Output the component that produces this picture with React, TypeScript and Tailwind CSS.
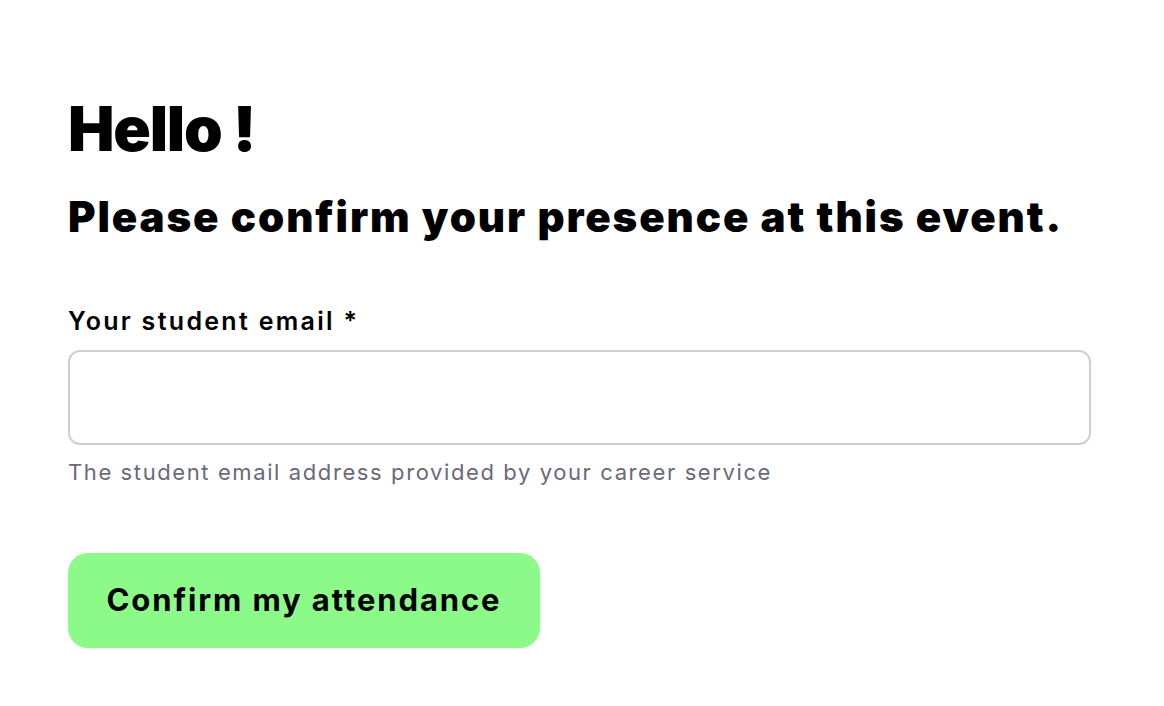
import React from "react";

export default function App() {
  return (
    <div className="min-h-[706px] w-full bg-white px-[68px] pt-[98px] font-['Inter',sans-serif] text-black">
      <h1 className="text-[62px] font-black leading-[62px] tracking-[-1.2px]">Hello !</h1>
      <h2 className="mt-[32px] text-[42px] font-black leading-[50px] tracking-[1.9px]">
        Please confirm your presence at this event.
      </h2>
      <div className="mt-[63px] w-[1023px]">
        <label className="block text-[25px] font-semibold leading-[32px] tracking-[2.3px]">
          Your student email *
        </label>
        <input
          type="email"
          className="mt-[13px] block h-[95px] w-full rounded-[12px] border-2 border-[#cfcfd3] bg-white px-4 outline-none"
        />
        <p className="mt-[12px] text-[22px] leading-[30px] tracking-[1.6px] text-[#6a6a78]">
          The student email address provided by your career service
        </p>
      </div>
      <button className="mt-[66px] flex h-[95px] w-[472px] items-center justify-center rounded-[20px] bg-[#8cfa88] text-[31px] font-bold tracking-[1.9px] text-black">
        Confirm my attendance
      </button>
    </div>
  );
}
